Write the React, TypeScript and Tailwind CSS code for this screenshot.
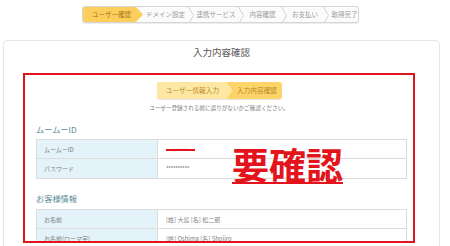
const STEPS = [
  { label: "ドメイン設定", w: "w-[45px]" },
  { label: "連携サービス", w: "w-[44px]" },
  { label: "内容確認", w: "w-[37px]" },
  { label: "お支払い", w: "w-[36px]" },
  { label: "取得完了", w: "w-[31px]" },
];

function Chevron() {
  return (
    <svg width="6" height="17" viewBox="0 0 6 17" className="shrink-0">
      <path d="M0.5 0 L5.5 8.5 L0.5 17" fill="none" stroke="#d2d2d2" strokeWidth="1" />
    </svg>
  );
}

function TopSteps() {
  return (
    <div className="ml-[82px] flex h-[17px] w-[277px] overflow-hidden rounded-[3px] border border-[#d6d6d6] bg-[#fbfbfb] shadow-[0_1px_1px_rgba(0,0,0,0.08)]">
      <div className="flex w-[60px] shrink-0 items-center justify-center bg-[#fccf5c] pr-[3px] text-[6.5px] text-[#a8731a] [clip-path:polygon(0_0,calc(100%-7px)_0,100%_50%,calc(100%-7px)_100%,0_100%)]">
        ユーザー確認
      </div>
      {STEPS.map((s, i) => (
        <div key={s.label} className="flex shrink-0">
          <div className={`flex ${s.w} items-center justify-center text-[6.5px] text-[#9a9a9a]`}>{s.label}</div>
          {i < STEPS.length - 1 && <Chevron />}
        </div>
      ))}
    </div>
  );
}

function Row({ label, children, last }: { label: string; children: React.ReactNode; last?: boolean }) {
  return (
    <div className={`grid h-[19px] grid-cols-[121px_1fr] ${last ? "" : "border-b border-[#dcdcdc]"}`}>
      <div className="flex items-center border-r border-[#dcdcdc] bg-[#e4f3f9] pl-[7px] text-[6px] text-[#808080]">{label}</div>
      <div className="relative flex items-center pl-[8px] text-[6px] text-[#808080]">{children}</div>
    </div>
  );
}

export default function App() {
  return (
    <div className="relative h-[246px] w-[450px] overflow-hidden bg-white font-['Noto_Sans_CJK_JP',sans-serif]">
      <div className="pt-[6px]">
        <TopSteps />
      </div>

      <div className="ml-[3px] mt-[17px] h-[230px] w-[437px] rounded-[4px] border border-[#e6e6e6] pt-[5px]">
        <div className="text-center text-[9.5px] leading-[12px] text-[#555]">入力内容確認</div>

        <div className="relative ml-[19px] mt-[15px] h-[170px] w-[392px] overflow-hidden border-2 border-[#e3141b]">
          <div className="flex justify-center pt-[7px]">
            <div className="flex h-[17px] w-[125px] overflow-hidden rounded-[3px] bg-[#fcd46a] shadow-[0_1px_1px_rgba(0,0,0,0.1)]">
              <div className="flex w-[76px] shrink-0 items-center justify-center bg-[#fde7a3] pr-[4px] text-[6.7px] text-[#b98c2b] [clip-path:polygon(0_0,calc(100%-6px)_0,100%_50%,calc(100%-6px)_100%,0_100%)]">
                ユーザー情報入力
              </div>
              <div className="flex flex-1 items-center justify-center text-[6.7px] text-[#b7892a]">入力内容確認</div>
            </div>
          </div>

          <div className="mt-[5px] text-center text-[5.6px] leading-[8px] text-[#808080]">
            ユーザー登録される前に誤りがないかご確認ください。
          </div>

          <div className="ml-[11px] mt-[12px] text-[8.2px] leading-[10px] text-[#5c8c98]">ムームーID</div>
          <div className="ml-[11px] mt-[5px] w-[371px] border border-[#dcdcdc]">
            <Row label="ムームーID">
              <span className="absolute left-[19px] top-[4px] text-[5px] tracking-[1px] text-[#ccc]">–––</span>
              <span className="mt-[1px] h-[2px] w-[29px] bg-[#e3141b]" />
            </Row>
            <Row label="パスワード" last>
              <span className="tracking-[-0.5px]">**********</span>
            </Row>
          </div>

          <div className="ml-[11px] mt-[14px] text-[8.2px] leading-[10px] text-[#5c8c98]">お客様情報</div>
          <div className="ml-[11px] mt-[6px] w-[371px] border border-[#dcdcdc]">
            <Row label="お名前">[姓] 大島 [名] 松二郎</Row>
            <Row label="お名前(ローマ字)" last>
              [姓] Oshima [名] Shojiro
            </Row>
          </div>

          <div className="absolute left-[207px] top-[71px] text-[37px] font-bold leading-[36px] text-[#e3141b] underline decoration-[2px] underline-offset-[2px]">
            要確認
          </div>
        </div>
      </div>
    </div>
  );
}
